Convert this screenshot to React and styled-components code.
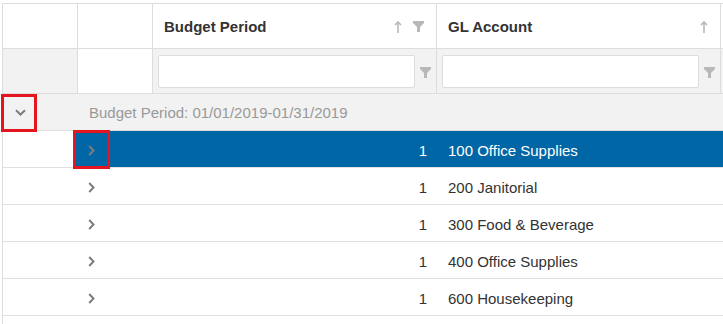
import React from 'react'
import styled, { createGlobalStyle } from 'styled-components'

const GlobalStyle = createGlobalStyle`
    html, body {
        margin: 0;
        padding: 0;
        background: #fff;
        overflow: hidden;
    }
    body {
        font-family: "Liberation Sans", Arial, sans-serif;
        font-size: 15px;
        color: #333;
    }
`

const HEAD_COLS = '75px 75px 284px 284px 1fr'
const ROW_COLS = '70px 37px 327px 284px 1fr'

const SortArrow = () => (
    <svg width="8" height="12" viewBox="0 0 8 12">
        <path d="M4 1 V12" stroke="#b8b8b8" strokeWidth="1.6" />
        <path d="M1 4 L4 1 L7 4" stroke="#b8b8b8" strokeWidth="1.6" fill="none" />
    </svg>
)

const Funnel = () => (
    <svg width="11" height="11" viewBox="0 0 11 11">
        <path d="M0 0 H11 V2 L7 6 V11 H4 V6 L0 2 Z" fill="#b8b8b8" />
    </svg>
)

const ChevronRight = () => (
    <svg width="7" height="11" viewBox="0 0 7 11">
        <path d="M1.2 1 L5.5 5.5 L1.2 10" stroke="#7d7d7d" strokeWidth="2" fill="none" />
    </svg>
)

const ChevronDown = () => (
    <svg width="11" height="7" viewBox="0 0 11 7">
        <path d="M1 1.2 L5.5 5.5 L10 1.2" stroke="#7d7d7d" strokeWidth="2" fill="none" />
    </svg>
)

const rows = [
    { count: 1, account: '100 Office Supplies', selected: true },
    { count: 1, account: '200 Janitorial' },
    { count: 1, account: '300 Food & Beverage' },
    { count: 1, account: '400 Office Supplies' },
    { count: 1, account: '600 Housekeeping' },
]

const App = () => {
    return (
        <>
            <GlobalStyle />
            <Grid>
                <HeaderRow>
                    <HeadCell />
                    <HeadCell />
                    <HeadCell>
                        <span>Budget Period</span>
                        <Icons>
                            <SortArrow />
                            <Funnel />
                        </Icons>
                    </HeadCell>
                    <HeadCell>
                        <span>GL Account</span>
                        <Icons>
                            <SortArrow />
                        </Icons>
                    </HeadCell>
                    <HeadCell />
                </HeaderRow>

                <FilterRow>
                    <FilterCell />
                    <FilterCell $blank />
                    <FilterCell>
                        <FilterInput />
                        <FilterIcon><Funnel /></FilterIcon>
                    </FilterCell>
                    <FilterCell>
                        <FilterInput />
                        <FilterIcon><Funnel /></FilterIcon>
                    </FilterCell>
                    <FilterCell />
                </FilterRow>

                <GroupRow>
                    <GroupExpand>
                        <ChevronDown />
                        <Marker />
                    </GroupExpand>
                    <GroupText>Budget Period: 01/01/2019-01/31/2019</GroupText>
                </GroupRow>

                {rows.map((r, i) => (
                    <DataRow key={r.account} $selected={r.selected}>
                        <Cell />
                        <ExpandCell>
                            <ChevronRight />
                            {i === 0 && <Marker />}
                        </ExpandCell>
                        <NumberCell>{r.count}</NumberCell>
                        <Cell>{r.account}</Cell>
                        <Cell />
                    </DataRow>
                ))}
            </Grid>
        </>
    )
}

export default App

const Grid = styled.div`
    margin: 3px 0 0 2px;
    height: calc(100vh - 3px);
    box-sizing: border-box;
    border-left: 1px solid #ddd;
    border-top: 1px solid #ddd;
    display: flex;
    flex-direction: column;
`

const HeaderRow = styled.div`
    display: grid;
    grid-template-columns: ${HEAD_COLS};
    height: 45px;
    flex-shrink: 0;
    border-bottom: 1px solid #ddd;
    box-sizing: border-box;
`

const HeadCell = styled.div`
    display: flex;
    align-items: center;
    justify-content: space-between;
    padding: 1px 12px 0 11px;
    border-right: 1px solid #ddd;
    font-weight: bold;
    color: #333;
    &:last-child {
        border-right: none;
    }
`

const Icons = styled.div`
    display: flex;
    align-items: center;
    gap: 11px;
`

const FilterRow = styled.div`
    display: grid;
    grid-template-columns: ${HEAD_COLS};
    height: 45px;
    flex-shrink: 0;
    border-bottom: 1px solid #ddd;
    box-sizing: border-box;
`

const FilterCell = styled.div`
    display: flex;
    align-items: center;
    padding-left: 5px;
    background: ${p => (p.$blank ? '#fff' : '#f2f2f2')};
    border-right: 1px solid #ddd;
    &:last-child {
        border-right: none;
    }
`

const FilterInput = styled.div`
    flex: 1;
    height: 33px;
    margin-top: 1px;
    box-sizing: border-box;
    background: #fff;
    border: 1px solid #ddd;
    border-radius: 2px;
`

const FilterIcon = styled.div`
    width: 21px;
    display: flex;
    justify-content: center;
    padding-top: 2px;
`

const GroupRow = styled.div`
    display: flex;
    align-items: center;
    height: 37px;
    flex-shrink: 0;
    background: #f2f2f2;
    border-bottom: 1px solid #ddd;
    box-sizing: border-box;
`

const GroupExpand = styled.div`
    position: relative;
    width: 34px;
    height: 100%;
    display: flex;
    align-items: center;
    justify-content: center;
`

const GroupText = styled.div`
    margin-left: 52px;
    color: #999;
`

const Marker = styled.span`
    position: absolute;
    left: -2px;
    right: 0;
    top: 0;
    bottom: -2px;
    border: 3px solid #e3151f;
    z-index: 2;
    pointer-events: none;
`

const DataRow = styled.div`
    display: grid;
    grid-template-columns: ${ROW_COLS};
    height: 37px;
    flex-shrink: 0;
    border-bottom: 1px solid #e0e0e0;
    box-sizing: border-box;
    color: ${p => (p.$selected ? '#fff' : '#333')};
    background: ${p => (p.$selected ? '#0066a6' : '#fff')};
    & > div:first-child {
        background: #fff;
    }
`

const Cell = styled.div`
    display: flex;
    align-items: center;
    padding: 2px 0 0 11px;
`

const ExpandCell = styled.div`
    position: relative;
    display: flex;
    align-items: center;
    justify-content: center;
    padding-top: 2px;
    & > span {
        left: 0;
        top: -1px;
        bottom: -2px;
    }
`

const NumberCell = styled.div`
    display: flex;
    align-items: center;
    justify-content: flex-end;
    padding: 2px 10px 0 0;
`
